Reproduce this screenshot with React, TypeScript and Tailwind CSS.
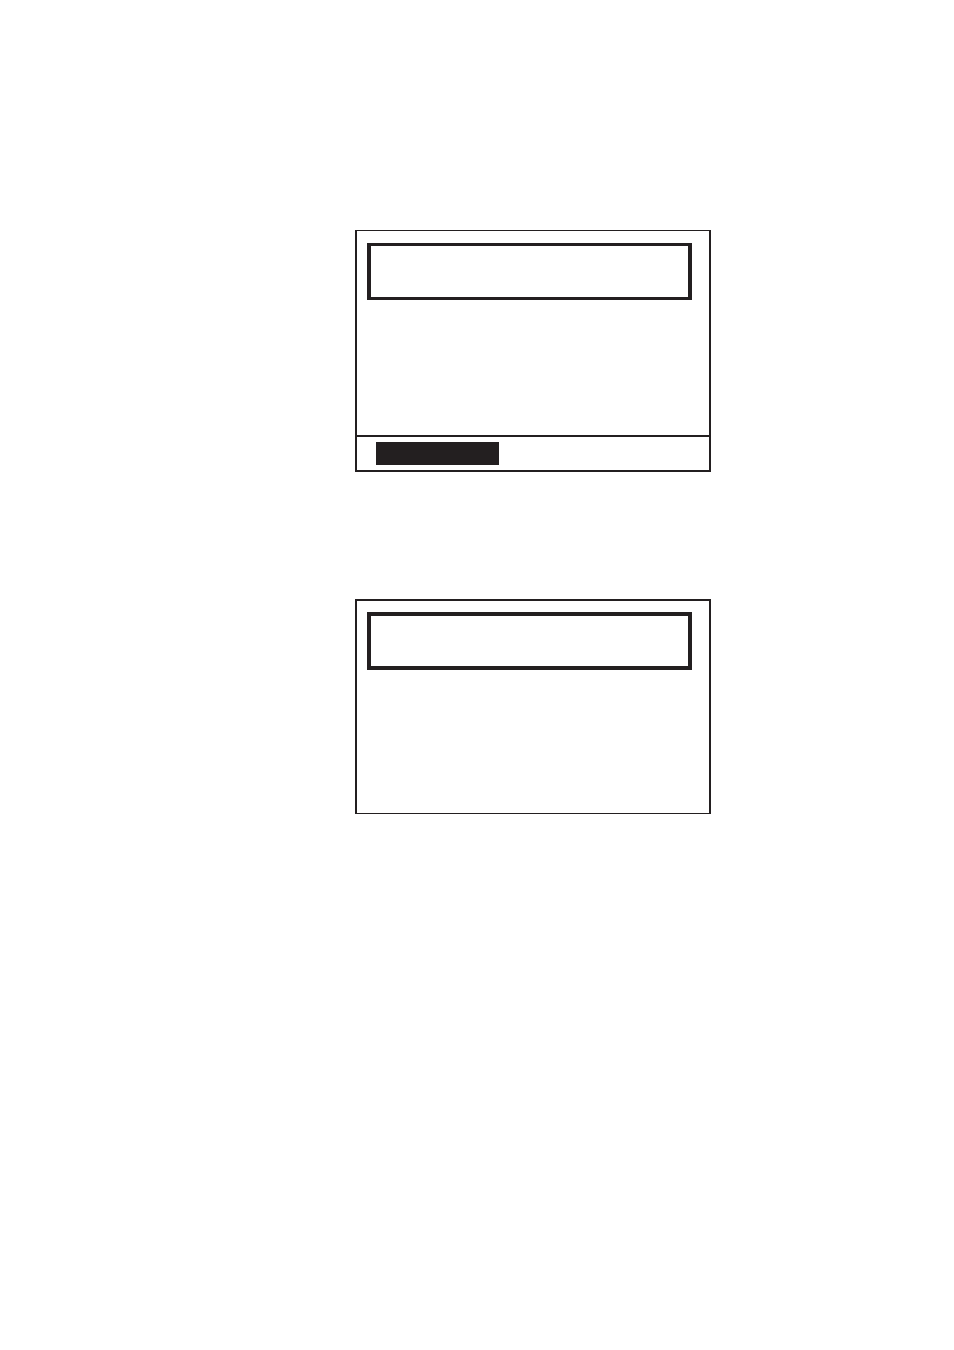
type ScreenProps = {
  className: string;
  bodyClass: string;
  titleClass: string;
  softKeys?: boolean;
};

function Screen({ className, bodyClass, titleClass, softKeys = false }: ScreenProps) {
  return (
    <section className={`border-x-2 border-[#231f20] ${className}`}>
      <div className={`pl-[10px] pr-[17px] ${bodyClass}`}>
        <div className={`border-x-4 border-[#231f20] ${titleClass}`} />
      </div>

      {softKeys && (
        <footer className="border-t-2 border-[#231f20] py-[5px] pl-[19px]">
          <div className="h-[23px] w-[123px] bg-[#231f20]" />
        </footer>
      )}
    </section>
  );
}

export default function App() {
  return (
    <main className="flex min-h-screen flex-col gap-[127px] bg-white pt-[230px] pr-[243px] pb-10 pl-[355px]">
      <Screen
        className="border-t border-b-2"
        bodyClass="min-h-[204px] pt-3"
        titleClass="h-[57px] border-y-[3px]"
        softKeys
      />
      <Screen
        className="border-t-2 border-b"
        bodyClass="min-h-[212px] pt-[11px]"
        titleClass="h-[58px] border-y-4"
      />
    </main>
  );
}
